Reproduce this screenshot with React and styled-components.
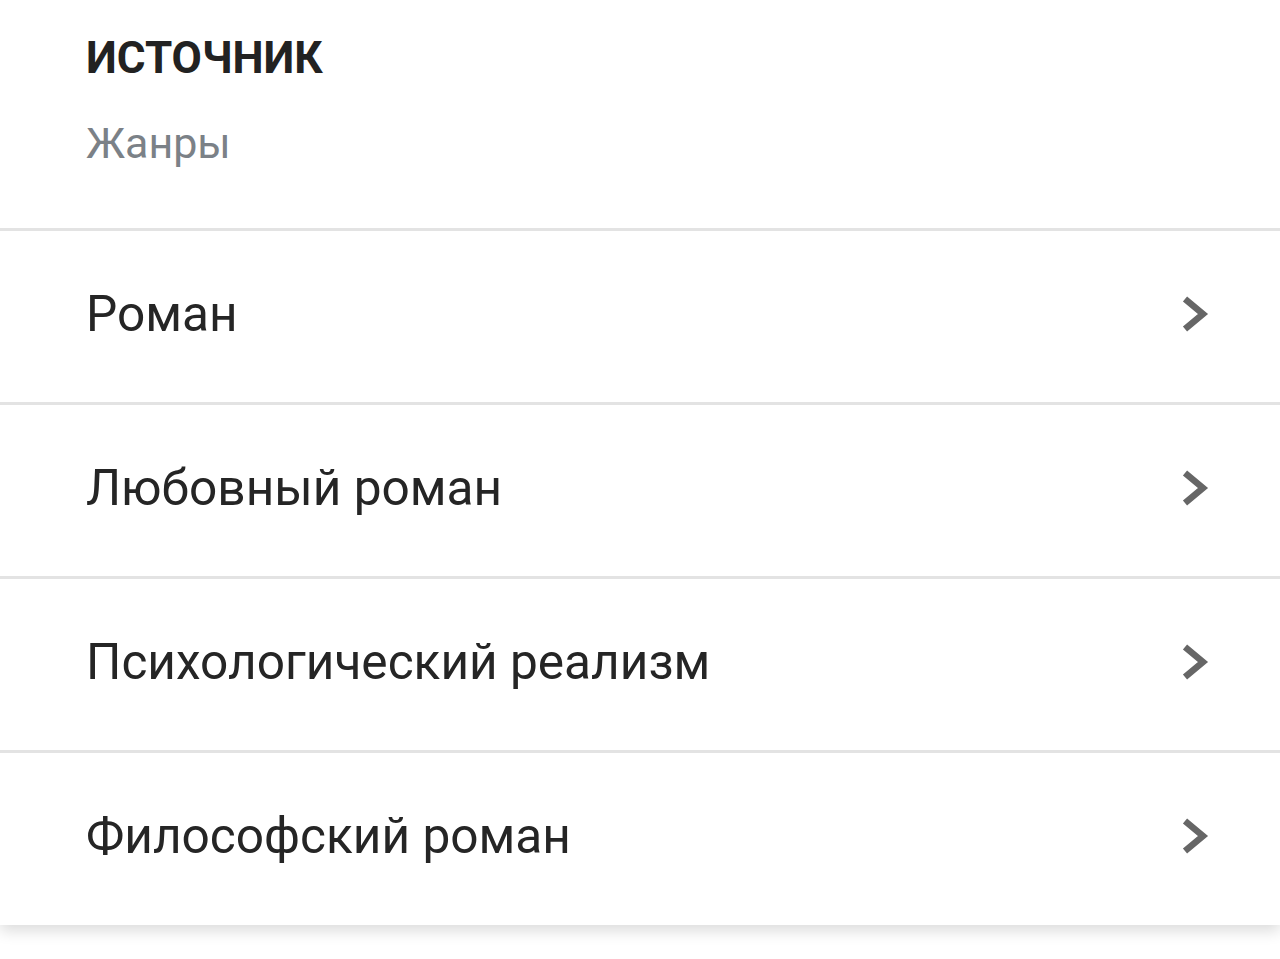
import React from 'react'
import styled, { createGlobalStyle } from 'styled-components';

const GlobalStyle = createGlobalStyle`
  html, body {
    margin: 0;
    padding: 0;
    background: #fff;
  }
  body {
    font-family: Roboto, "Noto Sans", Arial, sans-serif;
  }
`;

const Card = styled.div`
  background: #fff;
  box-shadow: 0 6px 14px rgba(0, 0, 0, 0.14);
  margin-bottom: 34px;
`;

const Header = styled.div`
  padding: 30px 0 58px 86px;
  display: flex;
  flex-direction: column;
  gap: 30px;
`;

const Title = styled.div`
  font-size: 44px;
  line-height: 56px;
  font-weight: 700;
  color: #222;
  text-transform: uppercase;
`;

const Subtitle = styled.div`
  font-size: 43px;
  line-height: 54px;
  color: #7b8187;
`;

const Row = styled.div`
  display: flex;
  align-items: center;
  justify-content: space-between;
  height: ${p => (p.last ? 175 : 174)}px;
  border-top: 3px solid #e3e3e3;
  padding: 0 70px 6px 86px;
  box-sizing: border-box;
`;

const Label = styled.span`
  font-size: 49.6px;
  color: #252525;
`;

const Chevron = () => (
  <svg width="28" height="40" viewBox="0 0 28 40">
    <polyline
      points="3,5 21,20 3,35"
      fill="none"
      stroke="#666"
      strokeWidth="6.5"
      strokeLinejoin="miter"
    />
  </svg>
);

const genres = [
  'Роман',
  'Любовный роман',
  'Психологический реализм',
  'Философский роман',
];

const App = () => (
  <>
    <GlobalStyle />
    <Card>
      <Header>
        <Title>Источник</Title>
        <Subtitle>Жанры</Subtitle>
      </Header>
      {genres.map((g, i) => (
        <Row key={g} last={i === genres.length - 1}>
          <Label>{g}</Label>
          <Chevron />
        </Row>
      ))}
    </Card>
  </>
);

export default App
